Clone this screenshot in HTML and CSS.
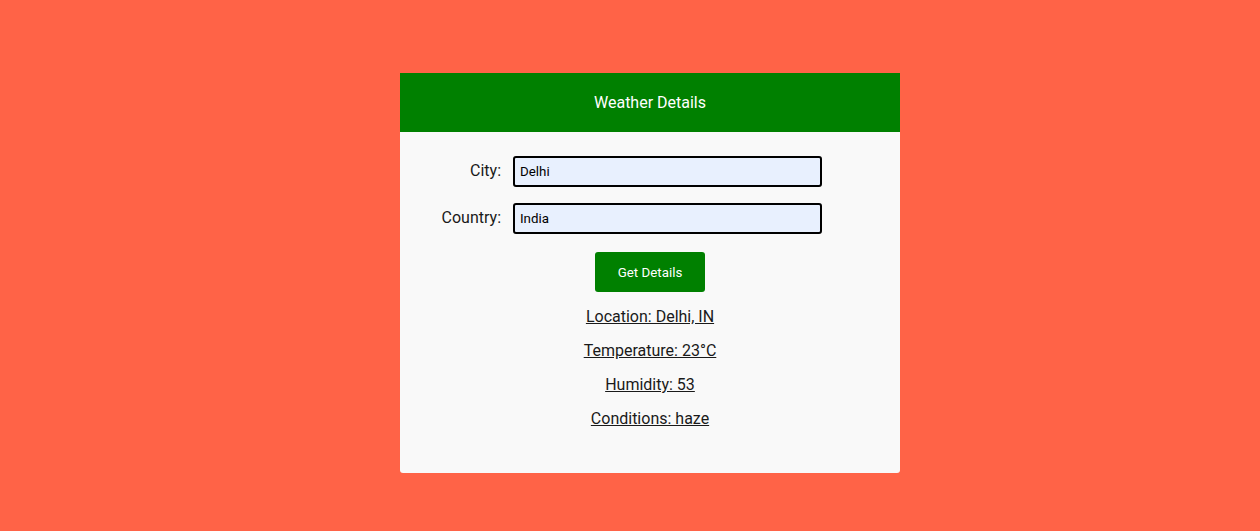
FILE: index.html
```html
<!DOCTYPE html>
<html>
<head>
<meta charset="utf-8">
<link rel="stylesheet" href="styles.css">
</head>
<body>
<div class="card">
  <div class="card-header">Weather Details</div>
  <div class="card-body">
    <div class="form-row">
      <label class="form-label">City:</label>
      <input class="form-input" type="text" value="Delhi">
    </div>
    <div class="form-row">
      <label class="form-label">Country:</label>
      <input class="form-input" type="text" value="India">
    </div>
    <div class="actions">
      <button class="btn">Get Details</button>
    </div>
    <div class="results">
      <p class="result">Location: Delhi, IN</p>
      <p class="result">Temperature: 23°C</p>
      <p class="result">Humidity: 53</p>
      <p class="result">Conditions: haze</p>
    </div>
  </div>
</div>
</body>
</html>
```
FILE: styles.css
```css
html, body {
  margin: 0;
  padding: 0;
}
body {
  background: #ff6347;
  font-family: Roboto, "Liberation Sans", sans-serif;
  height: 531px;
  overflow: hidden;
}
.card {
  width: 500px;
  margin: 73px 0 0 400px;
  background: #f9f9f9;
  border-radius: 0 0 3px 3px;
  overflow: hidden;
}
.card-header {
  background: #008000;
  color: #fff;
  font-size: 16px;
  line-height: 19px;
  padding: 20px 0;
  height: 19px;
  text-align: center;
}
.card-body {
  padding: 24px 0 45px;
}
.form-row {
  display: flex;
  align-items: center;
  margin-bottom: 16px;
}
.form-row:nth-of-type(2) {
  margin-bottom: 18px;
}
.form-label {
  width: 101px;
  text-align: right;
  margin-right: 12px;
  font-size: 16px;
  color: #1a1a1a;
  position: relative;
  top: -1px;
}
.form-input {
  box-sizing: border-box;
  width: 309px;
  height: 31px;
  border: 2px solid #000;
  border-radius: 3px;
  background: #e8f0fe;
  padding: 0 5px;
  font-family: Roboto, "Liberation Sans", sans-serif;
  font-size: 13.333px;
  color: #000;
  outline: none;
}
.actions {
  display: flex;
  justify-content: center;
}
.btn {
  width: 110px;
  height: 40px;
  background: #008000;
  color: #fff;
  border: none;
  border-radius: 3px;
  font-family: Roboto, "Liberation Sans", sans-serif;
  font-size: 13.333px;
}
.results {
  display: flex;
  flex-direction: column;
  align-items: center;
  gap: 15px;
  margin-top: 15px;
}
.result {
  margin: 0;
  font-size: 16px;
  line-height: 19px;
  color: #1a1a1a;
  text-decoration: underline;
}
```
